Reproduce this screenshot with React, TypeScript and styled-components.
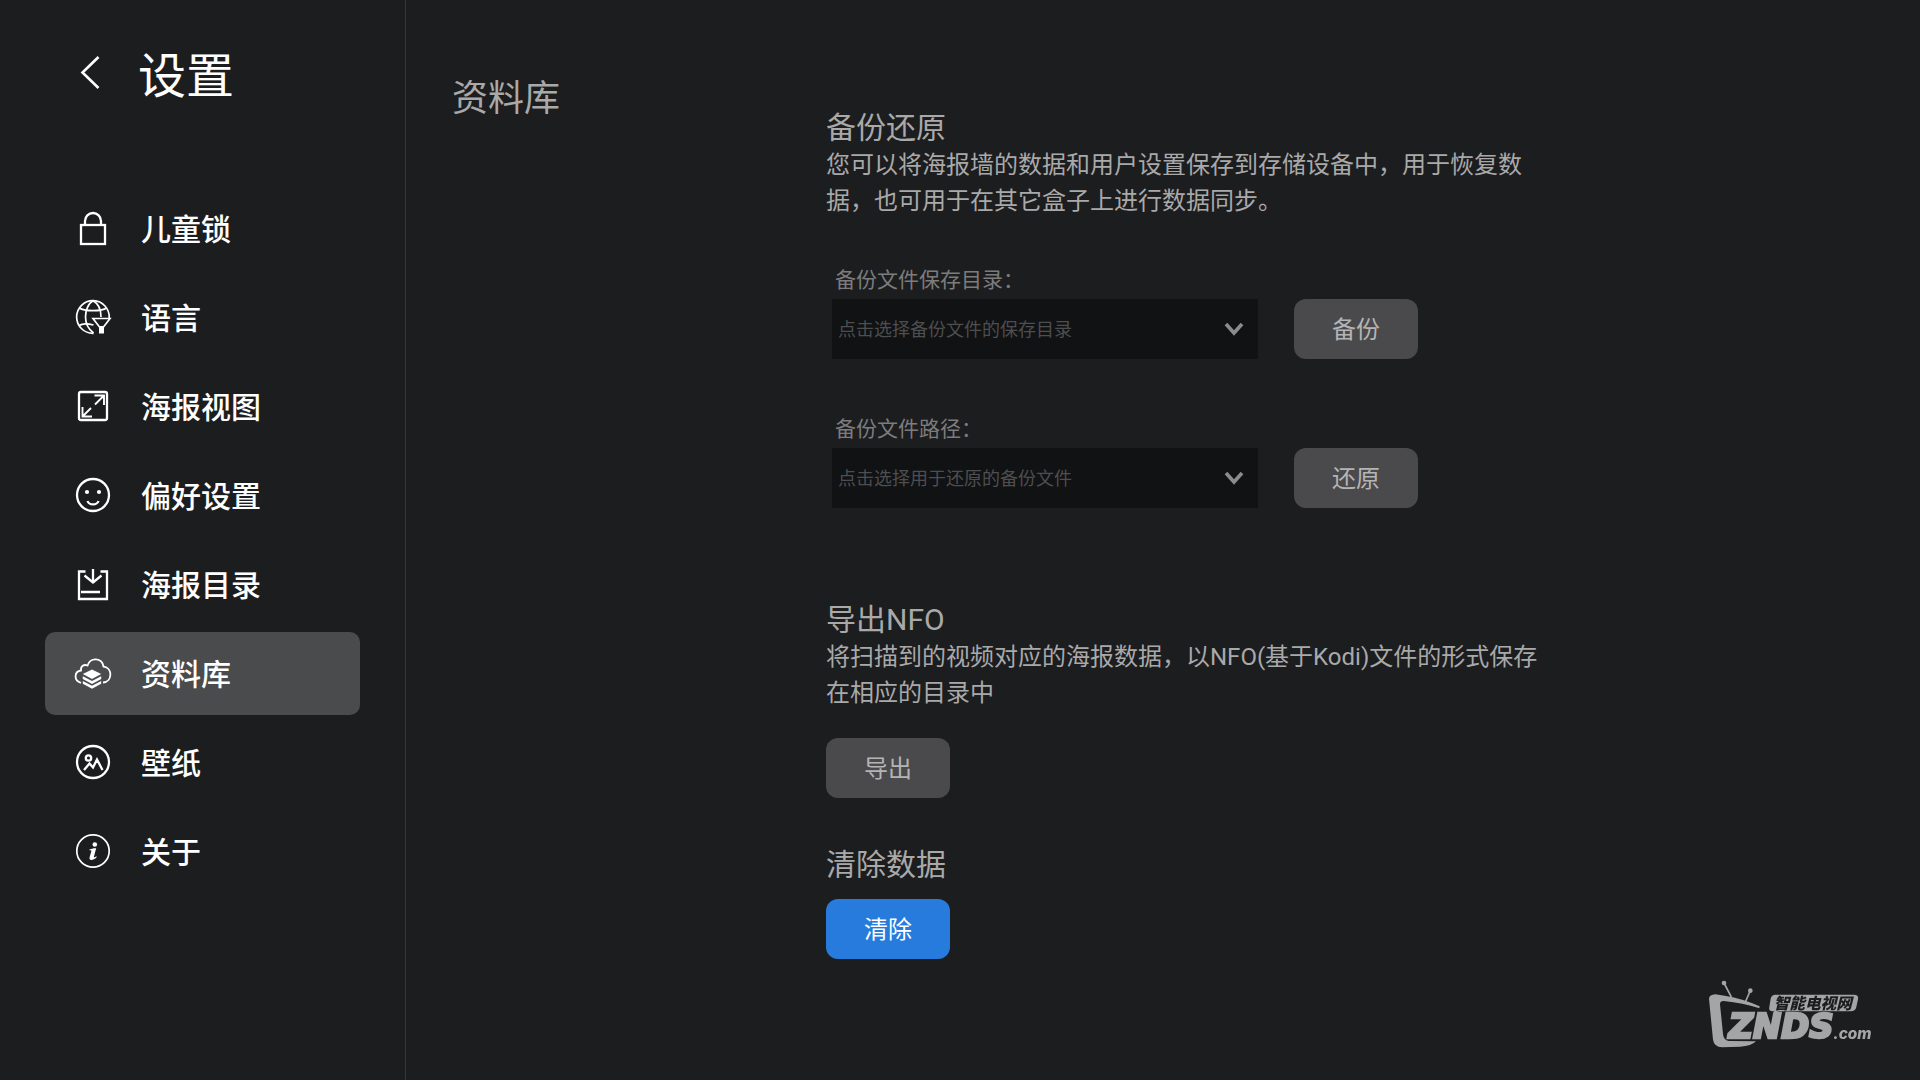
import React from "react";
import styled, { createGlobalStyle } from "styled-components";

const GlobalStyle = createGlobalStyle`
  *, *::before, *::after { box-sizing: border-box; }
  body {
    margin: 0;
    background: #1c1d1f;
    color: #a9a9aa;
    font-family: Roboto, "Noto Sans CJK SC", sans-serif;
  }
  h1, h2, p { margin: 0; font-weight: 400; }
  button, select { font-family: inherit; }
`;

const Page = styled.div`
  display: flex;
  min-height: 100vh;
`;

const Sidebar = styled.aside`
  flex: none;
  width: 406px;
  padding: 41px 45px 0;
  border-right: 1px solid #37383a;
`;

const SidebarHeader = styled.header`
  display: flex;
  align-items: center;
  gap: 33px;
  height: 72px;
  margin-bottom: 74px;
  padding-left: 30px;
`;

const BackButton = styled.button`
  display: flex;
  padding: 0 0 10px;
  border: 0;
  background: none;
  color: #fff;
  cursor: pointer;
`;

const SidebarTitle = styled.h1`
  color: #fff;
  font-size: 48px;
  line-height: 72px;
`;

const Nav = styled.nav`
  display: flex;
  flex-direction: column;
  gap: 6px;
`;

const NavItem = styled.a<{ $active?: boolean }>`
  display: flex;
  align-items: center;
  gap: 28px;
  height: 83px;
  padding: 0 0 2px 28px;
  border-radius: 10px;
  background: ${(p) => (p.$active ? "#4a4b4d" : "transparent")};
  color: #fff;
  font-size: 30px;
  font-weight: 500;
  text-decoration: none;
`;

const NavLabel = styled.span`
  padding-bottom: 2px;
`;

const NavIcon = styled.svg`
  flex: none;
  width: 40px;
  height: 40px;
  fill: none;
  stroke: currentColor;
  stroke-width: 2.3;
`;

const Main = styled.main`
  display: flex;
  flex: 1;
  padding: 72px 46px 40px;
`;

const PageTitle = styled.h1`
  flex: none;
  width: 374px;
  font-size: 36px;
  line-height: 54px;
`;

const Content = styled.div`
  flex: 1;
  max-width: 720px;
  padding-top: 38px;
`;

const Section = styled.section<{ $space?: number }>`
  margin-bottom: ${(p) => p.$space ?? 0}px;
`;

const SectionTitle = styled.h2`
  font-size: 30px;
  line-height: 36px;
`;

const Description = styled.p`
  margin-top: 1px;
  font-size: 24px;
  line-height: 36px;
`;

const Fields = styled.div`
  display: flex;
  flex-direction: column;
  gap: 55px;
  margin-top: 46px;
  padding-left: 6px;
`;

const FieldLabel = styled.label`
  display: block;
  margin-bottom: 4px;
  padding-left: 3px;
  color: #7c7c7d;
  font-size: 21px;
  line-height: 30px;
`;

const FieldRow = styled.div`
  display: flex;
  gap: 36px;
`;

const SelectBox = styled.div`
  display: grid;
  grid-template-columns: 1fr 48px;
  align-items: center;
  width: 426px;
  height: 60px;
  background: #111214;
`;

const Select = styled.select`
  grid-area: 1 / 1 / 2 / 3;
  width: 100%;
  height: 60px;
  padding: 0 48px 0 6px;
  border: 0;
  border-radius: 0;
  appearance: none;
  background: transparent;
  color: #4d4e4f;
  font-size: 18px;
`;

const Chevron = styled.svg`
  grid-area: 1 / 2 / 2 / 3;
  width: 20px;
  height: 14px;
  margin-left: 14px;
  fill: none;
  stroke: #8c8c8d;
  stroke-width: 3.6;
  pointer-events: none;
`;

const Button = styled.button<{ $primary?: boolean; $top?: number }>`
  display: block;
  width: 124px;
  height: 60px;
  margin-top: ${(p) => p.$top ?? 0}px;
  padding: 0 0 3px;
  border: 0;
  border-radius: 12px;
  background: ${(p) => (p.$primary ? "#277bdc" : "#4a4a4c")};
  color: ${(p) => (p.$primary ? "#fff" : "#b4b4b5")};
  font-size: 24px;
  cursor: pointer;
`;

const Watermark = styled.svg`
  position: fixed;
  right: 20px;
  bottom: 10px;
  width: 210px;
  height: 110px;
  fill: #a4a5a7;
`;

const icons = {
  lock: (
    <>
      <rect x="8" y="17" width="24" height="19" />
      <path d="M12 17v-4a8 8 0 0 1 16 0v4" />
    </>
  ),
  language: (
    <g strokeWidth="1.7">
      <path d="M20.500 36.300A16.300 16.300 0 1 1 36.200 21" />
      <path d="M20.500 36C14 31 12.500 26 12.500 20S15 6.500 20 3.800C25 6.500 28 13 28 20" />
      <path d="M6.500 11C11 14.500 29 14.500 33.500 11M6 28.500C9 26.500 15 26.500 20.500 28" />
      <path d="M20 21.500h17L30.500 30h-4z" />
      <path d="M26 29h5v7.500h-5z" fill="currentColor" stroke="none" />
    </g>
  ),
  poster: (
    <>
      <rect x="6" y="6" width="28" height="28" rx="2" />
      <path d="M21.500 9.500H31V19M31 9.500 22 18.500M9.500 21v9.500H19M9.500 30.500l8.500-8.500" strokeWidth="1.900" />
    </>
  ),
  smile: (
    <>
      <circle cx="20" cy="20" r="16" />
      <circle cx="14" cy="17" r="2.100" fill="currentColor" stroke="none" />
      <circle cx="26" cy="17" r="2.100" fill="currentColor" stroke="none" />
      <path d="M14.500 26c1.500 4.500 9.500 4.500 11 0" />
    </>
  ),
  folder: (
    <>
      <path d="M12.500 7.500H6V35h28V7.500h-6.500M8 28h19" />
      <path d="M20 5v13M11.500 11.500l8.500 7 8.500-7" />
    </>
  ),
  library: (
    <>
      <path
        d="M8 29.800C.500 27.500 1 18.500 8 17.500 7.500 13 11 11 14.500 12.500 17.500 4 29 4.500 30.500 13.500 40 15 39.500 28.500 30 29.500"
        strokeWidth="1.800"
      />
      <g fill="currentColor" stroke="none">
        <path d="M19 16.500 28.200 21 19 26 9.800 21z" />
        <path d="M9.800 23.300 19 28.100l9.200-4.800v2.600L19 30.900l-9.200-5z" />
        <path d="M9.800 28 19 32.800l9.200-4.800v2.700L19 35.800l-9.200-5.100z" />
      </g>
    </>
  ),
  wallpaper: (
    <>
      <circle cx="20" cy="20" r="16" />
      <circle cx="15.500" cy="16" r="2.700" />
      <path d="m11 28 5.500-6.500 3.500 4 4-8 5.500 10.500" />
    </>
  ),
  about: (
    <>
      <circle cx="20" cy="20" r="16.200" strokeWidth="1.700" />
      <circle cx="21.800" cy="13.500" r="2.300" fill="currentColor" stroke="none" />
      <path
        d="M16.500 18.500c2-.500 3.500-1.200 5.500-1.200h1.200l-2.300 8.500c-.2 1 .6.900 2.300-.5l.6.700c-2 2.300-3.800 3-5.300 3-1.900 0-2.300-1.300-1.800-3l1.600-5.800c.2-.8-.3-.9-1.800-.8z"
        fill="currentColor"
        stroke="none"
      />
    </>
  ),
};

const menu: { icon: keyof typeof icons; text: string; active?: boolean }[] = [
  { icon: "lock", text: "儿童锁" },
  { icon: "language", text: "语言" },
  { icon: "poster", text: "海报视图" },
  { icon: "smile", text: "偏好设置" },
  { icon: "folder", text: "海报目录" },
  { icon: "library", text: "资料库", active: true },
  { icon: "wallpaper", text: "壁纸" },
  { icon: "about", text: "关于" },
];

const fields = [
  { id: "backup-dir", label: "备份文件保存目录：", hint: "点击选择备份文件的保存目录", action: "备份" },
  { id: "restore-file", label: "备份文件路径：", hint: "点击选择用于还原的备份文件", action: "还原" },
];

function Logo() {
  return (
    <Watermark viewBox="0 0 630 330" role="img" aria-label="ZNDS.com">
      <path d="M102 69 125 113M181 92l-15 34" stroke="#a4a5a7" strokeWidth="5" />
      <circle cx="102" cy="69" r="7" />
      <circle cx="181" cy="92" r="7" />
      <path d="M57 116Q58 104 76 103L104 107Q160 116 209 139L208 145Q160 129 101 123 90 123 90 133L99 222Q101 240 116 243L198 244Q185 258 150 260L96 262Q72 260 69 239Z" />
      <path d="M254 104H492Q507 104 504 118L499 141Q496 154 482 154H266L251 162 253 154H246Q235 152 238 141L242 116Q244 105 254 104Z" />
      <text x="251" y="147" fill="#1c1d1f" fontFamily="Noto Sans CJK SC, sans-serif" fontSize="47" fontWeight="900" fontStyle="italic">
        智能电视网
      </text>
      <text x="116" y="235" stroke="#a4a5a7" strokeWidth="8" fontFamily="DejaVu Sans, sans-serif" fontSize="101" fontWeight="700" fontStyle="italic">
        ZNDS
      </text>
      <text x="430" y="236" fontFamily="Inter, sans-serif" fontSize="46" fontWeight="800" fontStyle="italic">
        .com
      </text>
    </Watermark>
  );
}

export default function App() {
  return (
    <>
      <GlobalStyle />
      <Page>
        <Sidebar>
          <SidebarHeader>
            <BackButton aria-label="返回">
              <svg width="30" height="36" viewBox="0 0 30 36" fill="none" stroke="currentColor" strokeWidth="2.600">
                <path d="M23.500 3 7.500 18.500 23.500 34" />
              </svg>
            </BackButton>
            <SidebarTitle>设置</SidebarTitle>
          </SidebarHeader>
          <Nav>
            {menu.map((item) => (
              <NavItem key={item.icon} href="#" $active={item.active}>
                <NavIcon viewBox="0 0 40 40">{icons[item.icon]}</NavIcon>
                <NavLabel>{item.text}</NavLabel>
              </NavItem>
            ))}
          </Nav>
        </Sidebar>
        <Main>
          <PageTitle>资料库</PageTitle>
          <Content>
            <Section $space={94}>
              <SectionTitle>备份还原</SectionTitle>
              <Description>
                您可以将海报墙的数据和用户设置保存到存储设备中，用于恢复数据，也可用于在其它盒子上进行数据同步。
              </Description>
              <Fields>
                {fields.map((field) => (
                  <div key={field.id}>
                    <FieldLabel htmlFor={field.id}>{field.label}</FieldLabel>
                    <FieldRow>
                      <SelectBox>
                        <Select id={field.id}>
                          <option>{field.hint}</option>
                        </Select>
                        <Chevron viewBox="0 0 20 14">
                          <path d="m2 2 8 9 8-9" />
                        </Chevron>
                      </SelectBox>
                      <Button>{field.action}</Button>
                    </FieldRow>
                  </div>
                ))}
              </Fields>
            </Section>
            <Section $space={49}>
              <SectionTitle>导出NFO</SectionTitle>
              <Description>将扫描到的视频对应的海报数据，以NFO(基于Kodi)文件的形式保存在相应的目录中</Description>
              <Button $top={27}>导出</Button>
            </Section>
            <Section>
              <SectionTitle>清除数据</SectionTitle>
              <Button $primary $top={16}>
                清除
              </Button>
            </Section>
          </Content>
        </Main>
      </Page>
      <Logo />
    </>
  );
}
